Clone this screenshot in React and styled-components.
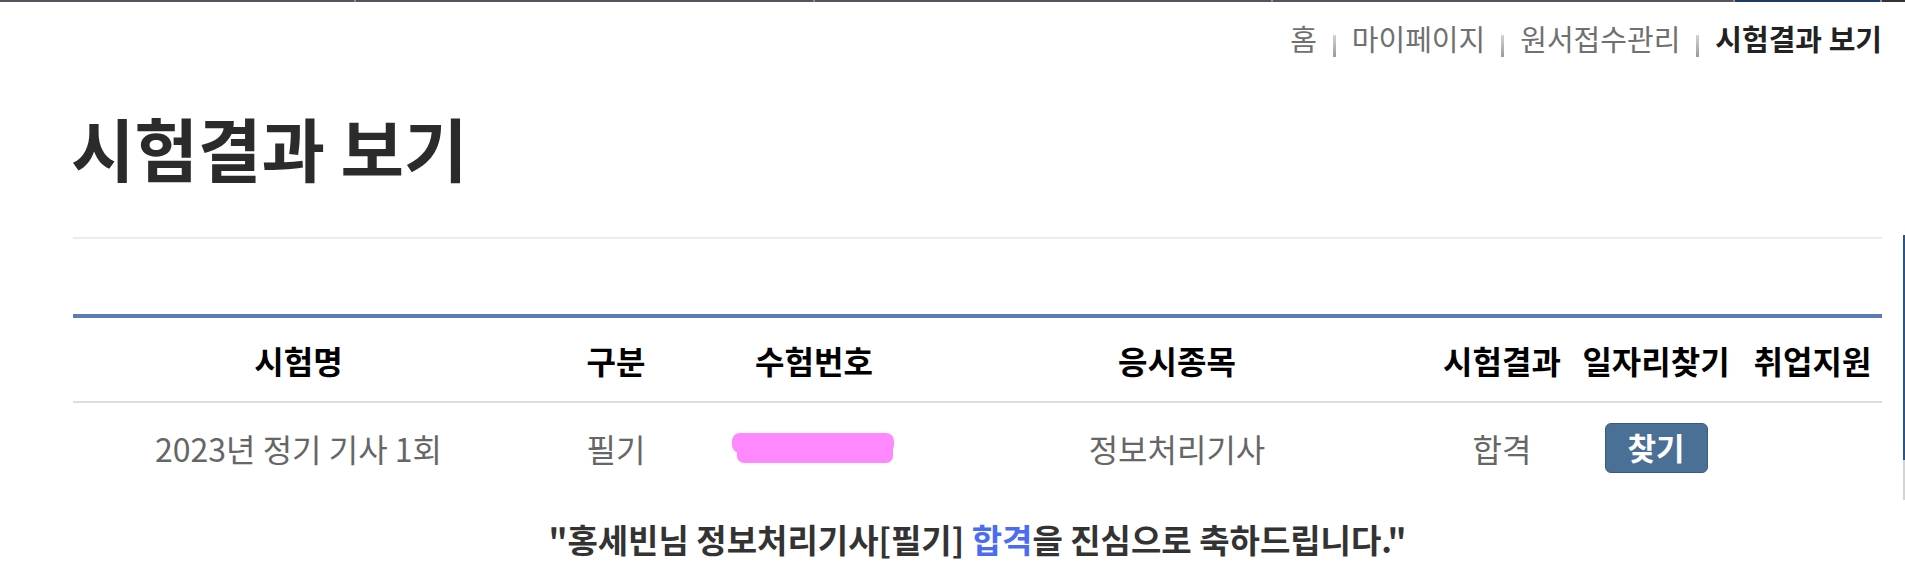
import styled, { createGlobalStyle } from 'styled-components'

// 페이지 기본 스타일
const GlobalStyle = createGlobalStyle`
  html, body {
    margin: 0;
    background: #fff;
    font-family: "Noto Sans CJK KR", "Noto Sans", sans-serif;
  }
`

// 상단 메뉴 하단 라인
const TopBar = styled.div`
  display: flex;
  gap: 2px;
  height: 2px;
  background: #8d8b97;
`
const TopSeg = styled.div`
  flex: 0 0 ${(p) => p.w}px;
  background: ${(p) => p.color || '#55535e'};
`

const Page = styled.div`
  padding: 0 23px 0 73px;
`

const Breadcrumb = styled.nav`
  display: flex;
  justify-content: flex-end;
  align-items: center;
  gap: 16px;
  margin-top: 16px;
  font-size: 29px;
  line-height: 40px;
  color: #707070;
`
const Crumb = styled.span`
  font-weight: ${(p) => (p.current ? 700 : 400)};
  color: ${(p) => (p.current ? '#222' : '#707070')};
`
const CrumbBar = styled.span`
  display: inline-block;
  width: 3px;
  height: 22px;
  margin-top: 16px;
  background: linear-gradient(#d4d4d4, #9a9a9a);
`

const Title = styled.h1`
  margin: 48px 0 0 -2px;
  font-size: 69px;
  line-height: 82px;
  font-weight: 700;
  color: #2b2b2b;
`

const Divider = styled.hr`
  margin: 49px 0 0;
  border: 0;
  height: 2px;
  background: #ececec;
`

const Table = styled.div`
  margin-top: 75px;
  border-top: 4px solid #5a7db6;
`
const Row = styled.div`
  display: grid;
  grid-template-columns: 451px 184px 212px 514px 136px 172px 141px;
  align-items: center;
  height: ${(p) => (p.head ? 83 : 90)}px;
  border-bottom: ${(p) => (p.head ? '2px solid #dddddd' : 'none')};
`
const Cell = styled.div`
  display: flex;
  justify-content: center;
  align-items: center;
  white-space: nowrap;
  font-size: 32px;
  font-weight: ${(p) => (p.head ? 700 : 400)};
  color: ${(p) => (p.head ? '#000' : '#666')};
`

const FindButton = styled.button`
  width: 103px;
  height: 50px;
  border: 1px solid #3a5b82;
  border-radius: 6px;
  background: #4a7095;
  color: #fff;
  font-family: inherit;
  font-size: 31px;
  font-weight: 700;
  line-height: 1;
  padding: 0 0 3px;
`

const Message = styled.p`
  margin: 24px 0 0;
  text-align: center;
  font-size: 33px;
  line-height: 44px;
  font-weight: 700;
  color: #333;
`
const Pass = styled.span`
  color: #4a6cf0;
`

// 오른쪽 끝 스크롤 막대 일부
const EdgeStrip = styled.div`
  position: fixed;
  right: 0;
  top: 235px;
  width: 2px;
  height: 265px;
  background: linear-gradient(#2c5587 0, #2c5587 85%, #d4d4d4 85%, #d4d4d4 100%);
`

const headers = ['시험명', '구분', '수험번호', '응시종목', '시험결과', '일자리찾기', '취업지원']

// 수험번호 가림 표시
const Redact = () => (
  <svg width="164" height="30" viewBox="0 0 164 30">
    <rect x="0" y="0" width="162" height="20" rx="8" fill="#ff88ff" />
    <rect x="5" y="8" width="156" height="22" rx="7" fill="#ff88ff" />
  </svg>
)

export default function App() {
  return (
    <>
      <GlobalStyle />
      <TopBar>
        <TopSeg w={354} />
        <TopSeg w={457} />
        <TopSeg w={456} />
        <TopSeg w={460} />
        <TopSeg w={145} color="#1e3a66" />
        <TopSeg w={23} color="#333" />
      </TopBar>
      <Page>
        <Breadcrumb>
          <Crumb>홈</Crumb>
          <CrumbBar />
          <Crumb>마이페이지</Crumb>
          <CrumbBar />
          <Crumb>원서접수관리</Crumb>
          <CrumbBar />
          <Crumb current>시험결과 보기</Crumb>
        </Breadcrumb>
        <Title>시험결과 보기</Title>
        <Divider />
        <Table>
          <Row head>
            {headers.map((h) => (
              <Cell head key={h}>{h}</Cell>
            ))}
          </Row>
          <Row>
            <Cell>2023년 정기 기사 1회</Cell>
            <Cell>필기</Cell>
            <Cell><Redact /></Cell>
            <Cell>정보처리기사</Cell>
            <Cell>합격</Cell>
            <Cell><FindButton>찾기</FindButton></Cell>
            <Cell />
          </Row>
        </Table>
        <Message>
          "홍세빈님 정보처리기사[필기] <Pass>합격</Pass>을 진심으로 축하드립니다."
        </Message>
      </Page>
      <EdgeStrip />
    </>
  )
}
